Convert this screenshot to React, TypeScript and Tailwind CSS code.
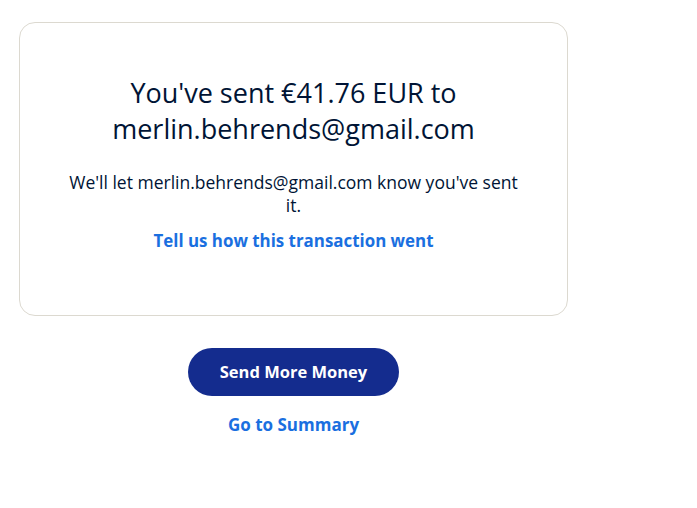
import React from "react";

export default function App() {
  return (
    <div className="min-h-[508px] w-[697px] bg-white" style={{ fontFamily: "'Open Sans', 'Noto Sans', sans-serif" }}>
      <div className="w-[549px] ml-[19px] pt-[22px]">
        <div className="border border-[#dcd9d0] rounded-[16px] h-[294px] flex flex-col items-center pt-[52px]">
          <h1 className="text-[27px] leading-[36px] text-[#001435] text-center font-normal">
            You've sent €41.76 EUR to
            <br />
            merlin.behrends@gmail.com
          </h1>
          <p className="mt-[24px] w-[458px] text-center text-[17.5px] leading-[23px] text-[#001435]">
            We'll let merlin.behrends@gmail.com know you've sent it.
          </p>
          <a className="mt-[12px] text-[16.9px] leading-[24px] font-bold text-[#1a6fe0]">
            Tell us how this transaction went
          </a>
        </div>
        <div className="flex flex-col items-center mt-[32px]">
          <button className="w-[211px] h-[48px] rounded-full bg-[#142c8e] text-white text-[16.5px] font-bold">
            Send More Money
          </button>
          <a className="mt-[17px] text-[17px] leading-[24px] font-bold text-[#1a6fe0]">Go to Summary</a>
        </div>
      </div>
    </div>
  );
}
